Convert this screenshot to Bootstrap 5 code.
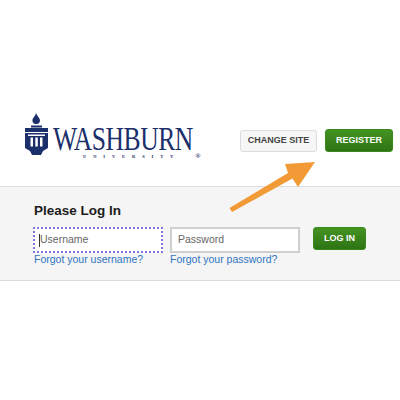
<!DOCTYPE html>
<html lang="en">

<head>
    <meta charset="UTF-8">
    <meta name="viewport" content="width=device-width, initial-scale=1.0">
    <title>Washburn University - Log In</title>
    <link href="https://cdn.jsdelivr.net/npm/bootstrap@5.3.0/dist/css/bootstrap.min.css" rel="stylesheet">
    <style>
        body {
            background-color: #fff;
            font-family: "Liberation Sans", Arial, sans-serif;
            position: relative;
            height: 400px;
            overflow: hidden;
        }

        .site-head {
            height: 186px;
            padding: 112px 7px 0 25px;
        }

        .seal-icon {
            width: 23px;
            height: 44px;
            flex: none;
        }

        .logo-block {
            width: 147px;
            flex: none;
            margin: 14px 0 0 5px;
            color: #1b2f6b;
            font-family: "Liberation Serif", "Times New Roman", serif;
            line-height: 1;
        }

        .logo-word {
            font-size: 33px;
            letter-spacing: -.6px;
            line-height: 27px;
            height: 27px;
            white-space: nowrap;
            transform: scaleX(.775);
            transform-origin: left top;
        }

        .logo-sub {
            font-size: 4.500px;
            font-weight: bold;
            letter-spacing: 6.900px;
            padding-left: 30px;
            line-height: 6px;
            white-space: nowrap;
        }

        .logo-mark {
            font-size: 7px;
            letter-spacing: 0;
            margin-left: 15px;
        }

        .btn-change {
            width: 77px;
            height: 22px;
            margin-top: 18px;
            margin-right: 8px;
            padding: 0;
            font-size: 9px;
            font-weight: bold;
            color: #444;
            background: #f6f6f6;
            border: 1px solid #dcdcdc;
            border-radius: 3px;
        }

        .btn-green {
            padding: 0;
            height: 23px;
            font-size: 9px;
            font-weight: bold;
            color: #fff;
            background: linear-gradient(#439322, #2e7414);
            border: 1px solid #3a8a1c;
            border-radius: 3px;
        }

        .btn-register {
            width: 68px;
            margin-top: 17px;
        }

        .btn-login {
            width: 53px;
            margin: 0 0 0 6px;
        }

        .login-panel {
            height: 95px;
            padding: 15px 0 0 33px;
            background: #f5f5f5;
            border-top: 1px solid #dcdcdc;
            border-bottom: 1px solid #dcdcdc;
        }

        .login-title {
            font-size: 13.500px;
            font-weight: bold;
            line-height: 17px;
            color: #1c1c1c;
            margin: 0 0 8px 1px;
        }

        .login-col {
            width: 130px;
            margin-right: 7px;
        }

        .login-input {
            width: 130px;
            height: 26px;
            padding: 0 6px;
            font-size: 10.500px;
            border: 2px solid #cfcfcf;
            border-radius: 0;
            background: #fff;
            color: #666;
            display: flex;
            align-items: center;
        }

        .login-input.is-active {
            border: 2px dotted #7d76dc;
            padding-left: 4px;
        }

        .caret-line {
            width: 1px;
            height: 13px;
            background: #333;
        }

        .forgot-link {
            display: block;
            font-size: 10.500px;
            line-height: 13px;
            color: #2f74c0;
            text-decoration: none;
            white-space: nowrap;
        }

        .forgot-first {
            margin-left: 1px;
        }

        .arrow-over {
            position: absolute;
            left: 225px;
            top: 158px;
            width: 95px;
            height: 58px;
        }
    </style>
</head>

<body>
    <!-- Cabecera -->
    <div class="site-head d-flex align-items-start">
        <svg class="seal-icon" viewBox="0 0 23 44">
            <path fill="#1b2f6b" d="M11 1c1 3 4 5 4 7.500s-2 3.500-3 3.500h-1c-2 0-4-1.500-3.500-4.500 .5-2 3-3.500 3.500-6.500z" />
            <path fill="#1b2f6b" d="M6 13.500h11v2H6zM0 16h23v4H0zM0 21h23v15l-5 3-2 4H7l-2-4-5-3z" />
            <path fill="#fff" d="M3 22.500h17v1.500H3zM5.500 25.500h2.500v9H5.500zM10.300 25.500h2.500v9h-2.500zM15 25.500h2.500v9H15z" />
        </svg>
        <div class="logo-block">
            <div class="logo-word">WASHBURN</div>
            <div class="logo-sub">UNIVERSITY<span class="logo-mark">®</span></div>
        </div>
        <div class="ms-auto d-flex align-items-start">
            <button class="btn btn-change" type="button">CHANGE SITE</button>
            <button class="btn btn-green btn-register" type="button">REGISTER</button>
        </div>
    </div>

    <!-- Login -->
    <div class="login-panel">
        <h1 class="login-title">Please Log In</h1>
        <div class="d-flex align-items-start">
            <div class="login-col">
                <div class="login-input is-active"><span class="caret-line"></span>Username</div>
                <a class="forgot-link forgot-first" href="#">Forgot your username?</a>
            </div>
            <div class="login-col">
                <div class="login-input">Password</div>
                <a class="forgot-link" href="#">Forgot your password?</a>
            </div>
            <button class="btn btn-green btn-login" type="button">LOG IN</button>
        </div>
    </div>

    <svg class="arrow-over" viewBox="0 0 95 58">
        <path fill="#f29a35" d="M60 6 90 4 73 29 67.500 20.500 7 54 4.500 50 63 15z" />
    </svg>

    <script src="https://cdn.jsdelivr.net/npm/bootstrap@5.3.0/dist/js/bootstrap.bundle.min.js"></script>
</body>

</html>
